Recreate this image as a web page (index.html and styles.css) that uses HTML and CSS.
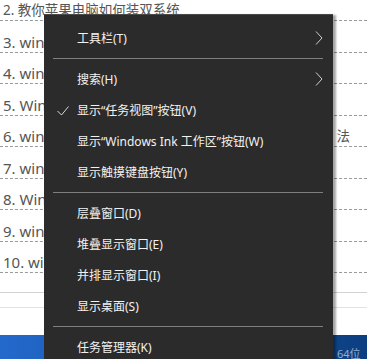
FILE: index.html
```html
<!DOCTYPE html>
<html lang="zh-CN">
<head>
  <meta charset="UTF-8" />
  <title>任务栏右键菜单</title>
  <link rel="stylesheet" href="styles.css">
</head>
<body>
  <ul class="article-list">
    <li class="first">2. 教你苹果电脑如何装双系统</li>
    <li>3. win7</li>
    <li>4. win7</li>
    <li>5. Win1</li>
    <li><span>6. win1</span><span class="tail">法</span></li>
    <li>7. win7</li>
    <li>8. Win1</li>
    <li>9. win7</li>
    <li>10. win</li>
  </ul>

  <div class="rule-area">
    <div class="rule-gap"></div>
  </div>

  <div class="taskbar">
    <span class="taskbar-text">64位</span>
  </div>

  <div class="context-menu">
    <div class="menu-item">工具栏(T)
      <svg class="chevron" width="8" height="14" viewBox="0 0 8 14"><polyline points="1,0.5 7,7 1,13.5" fill="none" stroke="#cfcfcf" stroke-width="1"/></svg>
    </div>
    <div class="menu-sep"></div>
    <div class="menu-item">搜索(H)
      <svg class="chevron" width="8" height="14" viewBox="0 0 8 14"><polyline points="1,0.5 7,7 1,13.5" fill="none" stroke="#cfcfcf" stroke-width="1"/></svg>
    </div>
    <div class="menu-item">
      <svg class="check" width="12" height="10" viewBox="0 0 12 10"><polyline points="0.5,5 4.5,9 11.5,0.5" fill="none" stroke="#d8d8d8" stroke-width="1"/></svg>
      显示“任务视图”按钮(V)
    </div>
    <div class="menu-item">显示“Windows Ink 工作区”按钮(W)</div>
    <div class="menu-item">显示触摸键盘按钮(Y)</div>
    <div class="menu-sep"></div>
    <div class="menu-item">层叠窗口(D)</div>
    <div class="menu-item">堆叠显示窗口(E)</div>
    <div class="menu-item">并排显示窗口(I)</div>
    <div class="menu-item">显示桌面(S)</div>
    <div class="menu-sep"></div>
    <div class="menu-item">任务管理器(K)</div>
  </div>
</body>
</html>
```

FILE: styles.css
```css
html, body {
  margin: 0;
  padding: 0;
  height: 100%;
  overflow: hidden;
}
body {
  background: #fff;
  font-family: "Noto Sans", "Noto Sans CJK SC", sans-serif;
  position: relative;
}
.article-list {
  list-style: none;
  margin: 0;
  padding: 0;
}
.article-list li {
  display: flex;
  justify-content: space-between;
  padding: 10.5px 17px 0 3px;
  height: 20px;
  line-height: 20px;
  font-size: 15px;
  color: #555;
  white-space: nowrap;
  border-bottom: 1px dashed #9a9a9a;
}
.article-list li.first {
  padding-top: 0;
  font-size: 13.5px;
}
.article-list .tail {
  font-size: 13.5px;
}
.rule-area {
  margin-top: 18.5px;
  border-top: 1px solid #d2d2d2;
}
.rule-gap {
  height: 14px;
  border-bottom: 1px solid #e2e2e2;
}
.taskbar {
  margin-top: 27px;
  height: 30px;
  background: linear-gradient(90deg, #2369cc 0%, #1a58ad 40%, #0c3f80 100%);
  position: relative;
}
.taskbar-text {
  position: absolute;
  left: 337px;
  top: 12px;
  font-size: 11px;
  line-height: 14px;
  color: #8eaed6;
}

.context-menu {
  position: absolute;
  left: 44px;
  top: 14px;
  width: 289px;
  height: 360px;
  padding-top: 8px;
  box-sizing: border-box;
  background: #2b2b2b;
  border-top: 1px solid #4a4a4a;
  box-shadow: 3px 1px 2px rgba(0, 0, 0, 0.35);
}
.menu-item {
  position: relative;
  height: 31px;
  line-height: 31px;
  padding-left: 33px;
  font-size: 12px;
  color: #f2f2f2;
  white-space: nowrap;
}
.menu-sep {
  height: 0;
  margin: 4px 10px 5px 9px;
  border-top: 1px solid #7f7f7f;
}
.chevron {
  position: absolute;
  right: 10px;
  top: 8px;
}
.check {
  position: absolute;
  left: 13px;
  top: 11px;
}
```
